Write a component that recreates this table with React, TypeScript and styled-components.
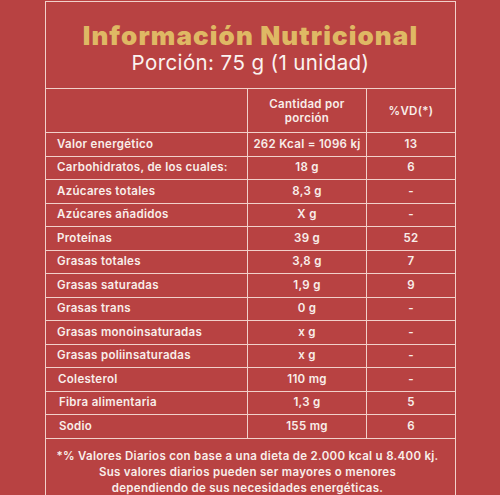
import React from "react";
import styled, { createGlobalStyle } from "styled-components";

const Global = createGlobalStyle`
  html, body { margin: 0; padding: 0; background: #b84242; }
  body { font-family: "Inter", "Noto Sans", sans-serif; color: #f8eeea; }
`;

const LINE = "#f2d0ca";

const Page = styled.div`
  width: 500px;
  height: 495px;
  overflow: hidden;
  background: #b84242;
  padding-top: 1px;
  box-sizing: border-box;
`;

const Card = styled.div`
  margin-left: 45px;
  width: 411px;
  border: 1px solid ${LINE};
  box-sizing: border-box;
`;

const TitleBlock = styled.div`
  height: 87px;
  border-bottom: 1px solid ${LINE};
  box-sizing: border-box;
  display: flex;
  flex-direction: column;
  align-items: center;
  padding-top: 19px;
`;

const Title = styled.h1`
  margin: 0;
  font-family: "Inter", sans-serif;
  font-weight: 900;
  font-size: 26px;
  line-height: 30px;
  letter-spacing: 1.1px;
  color: #dfb864;
`;

const Subtitle = styled.div`
  font-family: "Inter", sans-serif;
  font-weight: 400;
  font-size: 20.5px;
  line-height: 24px;
  letter-spacing: 0.4px;
  color: #fbf3f0;
`;

const Grid = styled.div`
  display: grid;
  grid-template-columns: 201px 118px 1fr;
  grid-template-rows: 43px repeat(13, 22.5px);
  gap: 1px;
  background: ${LINE};
  border-bottom: 1px solid ${LINE};
`;

const Cell = styled.div<{ $align?: "left" | "center"; $indent?: number }>`
  background: #b84242;
  display: flex;
  align-items: center;
  justify-content: ${(p) => (p.$align === "left" ? "flex-start" : "center")};
  padding-left: ${(p) => (p.$align === "left" ? 11 + (p.$indent || 0) : 0)}px;
  font-size: 11.5px;
  font-weight: 600;
  line-height: 13px;
  letter-spacing: 0.3px;
  text-align: center;
  white-space: nowrap;
`;

const HeadCell = styled(Cell)`
  line-height: 14px;
`;

const Footer = styled.div`
  padding: 9px 10px 0 4px;
  height: 60px;
  font-size: 11.5px;
  font-weight: 600;
  line-height: 16px;
  letter-spacing: 0.3px;
  text-align: center;
`;

const rows: [string, string, string, number?][] = [
  ["Valor energético", "262 Kcal = 1096 kj", "13"],
  ["Carbohidratos, de los cuales:", "18 g", "6"],
  ["Azúcares totales", "8,3 g", "-"],
  ["Azúcares añadidos", "X g", "-"],
  ["Proteínas", "39 g", "52"],
  ["Grasas totales", "3,8 g", "7"],
  ["Grasas saturadas", "1,9 g", "9"],
  ["Grasas trans", "0 g", "-"],
  ["Grasas monoinsaturadas", "x g", "-"],
  ["Grasas poliinsaturadas", "x g", "-"],
  ["Colesterol", "110 mg", "-", 1],
  ["Fibra alimentaria", "1,3 g", "5", 2],
  ["Sodio", "155 mg", "6", 2],
];

export default function App() {
  return (
    <Page>
      <Global />
      <Card>
        <TitleBlock>
          <Title>Información Nutricional</Title>
          <Subtitle>Porción: 75 g (1 unidad)</Subtitle>
        </TitleBlock>
        <Grid>
          <HeadCell />
          <HeadCell>
            Cantidad por
            <br />
            porción
          </HeadCell>
          <HeadCell>%VD(*)</HeadCell>
          {rows.map(([label, qty, vd, indent]) => (
            <React.Fragment key={label}>
              <Cell $align="left" $indent={indent}>
                {label}
              </Cell>
              <Cell>{qty}</Cell>
              <Cell>{vd}</Cell>
            </React.Fragment>
          ))}
        </Grid>
        <Footer>
          *% Valores Diarios con base a una dieta de 2.000 kcal u 8.400 kj.
          <br />
          Sus valores diarios pueden ser mayores o menores
          <br />
          dependiendo de sus necesidades energéticas.
        </Footer>
      </Card>
    </Page>
  );
}
